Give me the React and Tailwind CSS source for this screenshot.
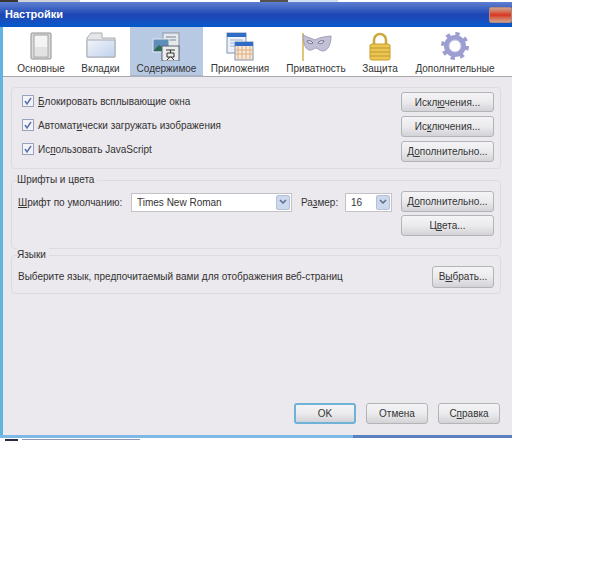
const font = "[font-family:'Liberation_Sans',Arial,sans-serif]";

function Check({ children }) {
  return (
    <label className="flex items-center gap-[4px] h-[24px]">
      <span className="w-[12px] h-[12px] ml-[10px] bg-[#f2f3f8] border border-[#98a3bb] flex items-center justify-center">
        <svg width="10" height="10" viewBox="0 0 10 10">
          <path d="M2 5l2 3 4-6" fill="none" stroke="#5a74a4" strokeWidth="1.5" />
        </svg>
      </span>
      <span>{children}</span>
    </label>
  );
}

function Btn({ children, className = "" }) {
  return (
    <button className={`flex items-center justify-center rounded-[3px] border border-[#b4b4b8] bg-gradient-to-b from-[#f4f4f6] via-[#ebebee] to-[#d3d3d7] text-[#333] text-[10px] ${className}`}>
      {children}
    </button>
  );
}

function Group({ title, className = "", children }) {
  return (
    <div className={`relative mx-[11px] rounded-[4px] border border-[#dcdbe0] ${className}`}>
      {title && (
        <span className="absolute left-[5px] -top-[8px] bg-[#ebe9ed] pr-[3px] leading-[14px]">{title}</span>
      )}
      {children}
    </div>
  );
}

function Tab({ label, active, width, children }) {
  return (
    <div
      className={`flex flex-col items-center h-[50px] ${active ? "bg-[#b7c9e3] border-b-2 border-[#a9b4c7]" : ""}`}
      style={{ width }}
    >
      <div className="h-[34px] pt-[5px] flex items-start justify-center">{children}</div>
      <span className="text-[10px] leading-[13px] mt-[1px] text-[#333] whitespace-nowrap">{label}</span>
    </div>
  );
}

function Select({ text, className = "" }) {
  return (
    <div className={`flex items-center h-[19px] bg-white border border-[#c2c2c8] pl-[5px] pr-[1px] ${className}`}>
      <span className="flex-1 text-[10px] text-[#333] truncate">{text}</span>
      <span className="w-[14px] h-[15px] rounded-[2px] bg-[#ccd8ec] border border-[#b4c0d6] flex items-center justify-center">
        <svg width="8" height="6" viewBox="0 0 8 6">
          <path d="M1 1l3 3 3-3" fill="none" stroke="#5a6b8a" strokeWidth="1.5" />
        </svg>
      </span>
    </div>
  );
}

export default function App() {
  return (
    <div className={`w-[600px] h-[563px] bg-white overflow-hidden text-[10px] text-[#333] ${font}`}>
      {/* scrap of the page behind the window */}
      <div className="h-[2px] w-[512px] flex">
        <div className="w-[18px] bg-[#3a3632]" />
        <div className="w-[62px] bg-[#d0d3da]" />
        <div className="w-[180px] bg-white" />
        <div className="w-[28px] bg-[#55504c]" />
        <div className="w-[50px] bg-[#cfe0f2]" />
      </div>

      <div className="w-[512px] h-[436px] flex flex-col">
        {/* title bar */}
        <div className="h-[25px] flex items-center justify-between bg-gradient-to-b from-[#5f7fd0] via-[#1f46b4] to-[#0059cc] pl-[5px]">
          <span className="text-white font-bold text-[11px]">Настройки</span>
          <span className="w-[23px] h-[16px] rounded-[2px] border border-[#b5887c] bg-gradient-to-b from-[#c9a08c] via-[#d8301a] to-[#c9a08c]" />
        </div>

        <div className="flex-1 flex flex-col bg-[#ebe9ed] border-l-[3px] border-[#62b4e0] min-h-0">
          {/* toolbar */}
          <div className="h-[50px] flex bg-white border-b border-[#a8a8aa] pl-[8px]">
            <Tab label="Основные" width={60}>
              <svg width="22" height="28" viewBox="0 0 22 28">
                <rect x="1" y="1" width="20" height="26" rx="1" fill="#dcdcdc" stroke="#8f8f8f" />
                <rect x="4" y="3" width="14" height="22" fill="#f4f4f4" stroke="#a0a0a0" />
                <rect x="5" y="15" width="12" height="9" fill="#e2e2e2" />
              </svg>
            </Tab>
            <Tab label="Вкладки" width={59}>
              <svg width="30" height="26" viewBox="0 0 30 26">
                <defs>
                  <linearGradient id="fo" x1="0" y1="0" x2="1" y2="1">
                    <stop offset="0" stopColor="#f2f4f8" />
                    <stop offset="1" stopColor="#bfd2ee" />
                  </linearGradient>
                </defs>
                <path d="M1 6l4-5h11v5h13v19H1z" fill="#e4e6ea" stroke="#a8acb2" />
                <path d="M1 8h28v17H1z" fill="url(#fo)" stroke="#a8acb2" />
              </svg>
            </Tab>
            <Tab label="Содержимое" width={73} active>
              <svg width="29" height="29" viewBox="0 0 29 29">
                <rect x="11" y="1" width="16" height="19" fill="#e6e8ec" stroke="#8e98a8" />
                <path d="M14 5h10M14 8h10" stroke="#7b8798" />
                <rect x="1" y="7" width="16" height="13" fill="#5f8fb8" stroke="#e4e8ee" />
                <path d="M2 18l5-5 4 3 5-2v5H2z" fill="#2f6a54" />
                <rect x="10" y="14" width="17" height="15" fill="#ececec" stroke="#5a6270" />
                <path d="M14 18h9M18.500 18v3M15 21h7v4h-7zM15 28l3-3M22 28l-3-3" fill="none" stroke="#333" />
              </svg>
            </Tab>
            <Tab label="Приложения" width={74}>
              <svg width="28" height="29" viewBox="0 0 28 29">
                <rect x="1" y="1" width="19" height="20" fill="#eef1f7" stroke="#7f93b6" />
                <rect x="1" y="1" width="19" height="4" fill="#2e6cc8" />
                <path d="M4 8h13M4 11h6M4 14h6" stroke="#9cb2d4" />
                <rect x="9" y="10" width="18" height="18" fill="#f3ead8" stroke="#7f93b6" />
                <rect x="9" y="10" width="18" height="4" fill="#2e6cc8" />
                <path d="M12 14v14M16 14v14M20 14v14M24 14v14M9 18h18M9 22h18" stroke="#e3ab80" />
              </svg>
            </Tab>
            <Tab label="Приватность" width={78}>
              <svg width="32" height="30" viewBox="0 0 32 30">
                <path d="M3 1v28" stroke="#d9b247" strokeWidth="1.500" />
                <path d="M3 3c6 3 8 3 12 5 5-3 9-3 16-4 0 8-3 15-8 15-4 0-5-3-7-3s-4 3-7 2C5 17 3 10 3 3z" fill="#c2c0d6" stroke="#a09dba" />
                <path d="M7 9c2-1 5 0 6 2-2 1-5 1-6-2zM24 9c-2-1-5 0-6 2 2 1 5 1 6-2z" fill="#e2e2ec" stroke="#6f6c88" />
              </svg>
            </Tab>
            <Tab label="Защита" width={50}>
              <svg width="24" height="29" viewBox="0 0 24 29">
                <path d="M6 13V8a6 6 0 0 1 12 0v5" fill="none" stroke="#cba83e" strokeWidth="2.500" />
                <rect x="2" y="12" width="20" height="16" rx="2" fill="#ecc650" stroke="#c79e2c" />
                <path d="M2 16h20M2 20h20M2 24h20" stroke="#bd972e" />
              </svg>
            </Tab>
            <Tab label="Дополнительные" width={100}>
              <svg width="28" height="28" viewBox="0 0 28 28">
                <circle cx="14" cy="14" r="8.500" fill="none" stroke="#9c9ed2" strokeWidth="5" />
                <circle cx="14" cy="14" r="6" fill="none" stroke="#c6c7e6" strokeWidth="1" />
                <circle cx="14" cy="14" r="12" fill="none" stroke="#9c9ed2" strokeWidth="4" strokeDasharray="4.200 5.220" />
              </svg>
            </Tab>
          </div>

          {/* content */}
          <div className="flex-1 flex flex-col pt-[10px] -ml-[3px]">
            <Group className="h-[82px] flex justify-between">
              <div className="pt-[1px]">
                <Check><u>Б</u>локировать всплывающие окна</Check>
                <Check>Автомат<u>и</u>чески загружать изображения</Check>
                <Check>Ис<u>п</u>ользовать JavaScript</Check>
              </div>
              <div className="flex flex-col gap-[4px] pt-[4px] pr-[6px]">
                <Btn className="w-[93px] h-[20px]"><span>Искл<u>ю</u>чения...</span></Btn>
                <Btn className="w-[93px] h-[21px]"><span>Ис<u>к</u>лючения...</span></Btn>
                <Btn className="w-[93px] h-[21px]"><span>Д<u>о</u>полнительно...</span></Btn>
              </div>
            </Group>

            <Group title="Шрифты и цвета" className="h-[69px] mt-[11px] flex justify-between">
              <div className="flex items-center h-[20px] mt-[11px] pl-[6px]">
                <span className="w-[113px] whitespace-nowrap"><u>Ш</u>рифт по умолчанию:</span>
                <Select text="Times New Roman" className="w-[161px]" />
                <span className="ml-[9px] w-[44px]">Ра<u>з</u>мер:</span>
                <Select text="16" className="w-[47px]" />
              </div>
              <div className="flex flex-col gap-[3px] pt-[10px] pr-[6px]">
                <Btn className="w-[93px] h-[21px]"><span>Д<u>о</u>полнительно...</span></Btn>
                <Btn className="w-[93px] h-[21px]"><span>Ц<u>в</u>ета...</span></Btn>
              </div>
            </Group>

            <Group title="Языки" className="h-[39px] mt-[6px] flex justify-between items-center">
              <span className="pl-[6px] pt-[4px]">Выберите язык, предпочитаемый вами для отображения веб-страниц</span>
              <Btn className="w-[62px] h-[22px] mr-[6px] mt-[4px]"><span>В<u>ы</u>брать...</span></Btn>
            </Group>

            <div className="mt-auto flex justify-end gap-[10px] pr-[12px] pb-[11px]">
              <Btn className="w-[62px] h-[21px] !border-[#6fb2d8] border-2">OK</Btn>
              <Btn className="w-[62px] h-[21px]">Отмена</Btn>
              <Btn className="w-[62px] h-[21px]"><span>С<u>п</u>равка</span></Btn>
            </div>
          </div>
        </div>

        {/* bottom edge of the window */}
        <div className="h-[3px] flex">
          <div className="w-[353px] bg-[#7db8e6]" />
          <div className="flex-1 bg-[#5b80c0]" />
        </div>
      </div>

      {/* scrap below the window */}
      <div className="h-[3px] w-[140px] ml-[5px] flex gap-[4px] items-center">
        <div className="w-[13px] h-[2px] bg-[#2a2a40]" />
        <div className="w-[118px] h-[1px] bg-[#9098b4]" />
      </div>
    </div>
  );
}
